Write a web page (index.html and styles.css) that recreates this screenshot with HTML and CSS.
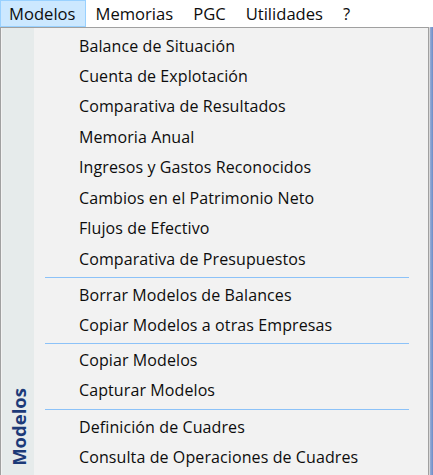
FILE: index.html
```html
<!DOCTYPE html>
<html lang="es">
<head>
<meta charset="utf-8">
<title>Modelos</title>
<link rel="stylesheet" href="styles.css">
</head>
<body>
<div class="menubar">
  <span class="mb-item active">Modelos</span>
  <span class="mb-item">Memorias</span>
  <span class="mb-item">PGC</span>
  <span class="mb-item">Utilidades</span>
  <span class="mb-item">?</span>
</div>
<div class="stage">
  <div class="dropdown">
    <div class="sidebar"><span class="side-label">Modelos</span></div>
    <ul class="items">
      <li class="item">Balance de Situación</li>
      <li class="item">Cuenta de Explotación</li>
      <li class="item tall">Comparativa de Resultados</li>
      <li class="item">Memoria Anual</li>
      <li class="item tall">Ingresos y Gastos Reconocidos</li>
      <li class="item">Cambios en el Patrimonio Neto</li>
      <li class="item tall">Flujos de Efectivo</li>
      <li class="item">Comparativa de Presupuestos</li>
      <li class="sep"></li>
      <li class="item">Borrar Modelos de Balances</li>
      <li class="item tall">Copiar Modelos a otras Empresas</li>
      <li class="sep short"></li>
      <li class="item">Copiar Modelos</li>
      <li class="item tall">Capturar Modelos</li>
      <li class="sep"></li>
      <li class="item">Definición de Cuadres</li>
      <li class="item tall">Consulta de Operaciones de Cuadres</li>
    </ul>
  </div>
  <div class="backwin"></div>
</div>
</body>
</html>
```
FILE: styles.css
```css
html, body {
  margin: 0;
  padding: 0;
  background: #ffffff;
  overflow: hidden;
  height: 475px;
}
body {
  font-family: "Open Sans", "Noto Sans", sans-serif;
  font-size: 16px;
  color: #0d0d0d;
}
.menubar {
  display: flex;
  height: 27px;
  align-items: stretch;
  background: #ffffff;
  font-size: 16.6px;
}
.mb-item {
  display: flex;
  align-items: center;
  padding: 0 10px 1px 8px;
  border: 1px solid transparent;
  height: 24px;
}
.mb-item.active {
  background: #cce8ff;
  border-color: #99d1ff;
}
.stage {
  display: flex;
  height: 448px;
}
.dropdown {
  width: 426px;
  border: 1px solid #a0a0a0;
  border-bottom: none;
  background: #f2f2f2;
  display: flex;
  padding: 0 0 0 1px;
  box-shadow: 1px 0 0 #d8d8d8;
}
.sidebar {
  width: 32px;
  background: #e6ebeb;
  display: flex;
  align-items: flex-end;
  justify-content: center;
  padding-bottom: 9px;
  box-sizing: border-box;
}
.side-label {
  writing-mode: vertical-rl;
  transform: rotate(180deg);
  font-weight: 700;
  font-size: 18.5px;
  color: #1c3a78;
}
.items {
  list-style: none;
  margin: 0;
  padding: 3px 0 0 0;
  flex: 1;
}
.item {
  height: 30px;
  line-height: 30px;
  padding-left: 45px;
  white-space: nowrap;
  letter-spacing: 0.1px;
}
.item.tall {
  height: 31px;
  line-height: 31px;
}
.sep {
  height: 6px;
  position: relative;
}
.sep.short {
  height: 4px;
}
.sep::after {
  content: "";
  position: absolute;
  left: 11px;
  right: 19px;
  top: 3px;
  height: 1px;
  background: #8cc2f8;
}
.sep.short::after {
  top: 2px;
}
.backwin {
  flex: 1;
  margin-left: 1px;
  background: linear-gradient(to right, #9aaed6, #6c8cc8);
}
```
